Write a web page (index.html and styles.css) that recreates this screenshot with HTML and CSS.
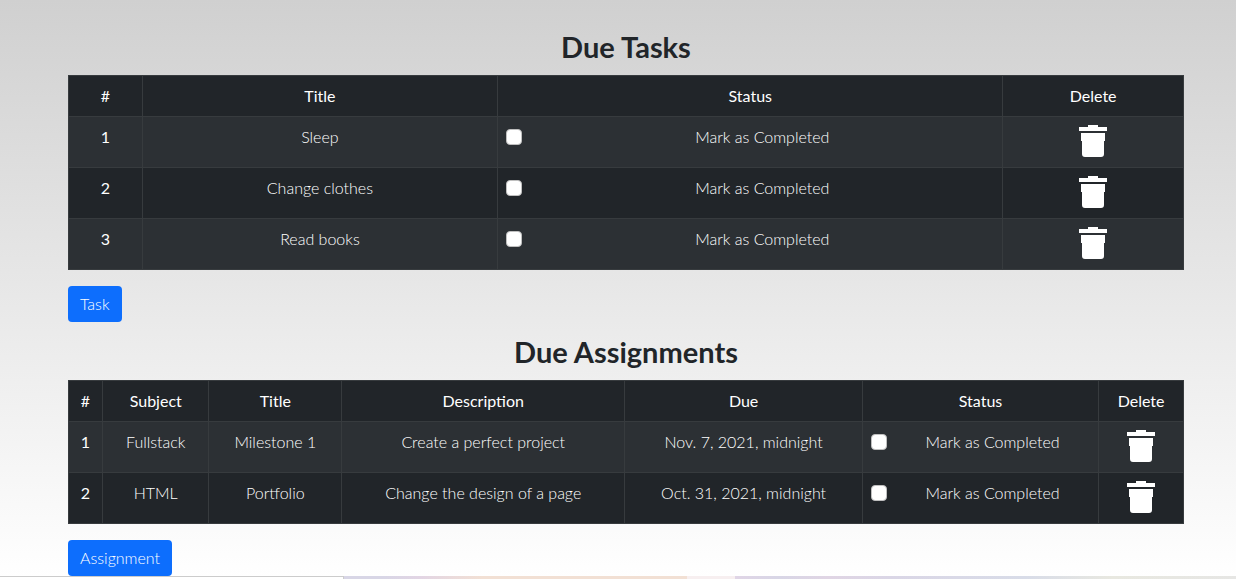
FILE: index.html
```html
<!DOCTYPE html>
<html lang="en">
<head>
<meta charset="utf-8">
<meta name="viewport" content="width=device-width, initial-scale=1">
<title>Due Tasks</title>
<link rel="stylesheet" href="styles.css">
</head>
<body>
<svg class="sprite" aria-hidden="true">
  <symbol id="trash" viewBox="0 0 28 32">
    <path d="M9 0h10v2h9v4H0V2h9z"/>
    <path d="M2 8h24v8h-1v13q0 3-3 3H6q-3 0-3-3V16H2z"/>
  </symbol>
</svg>
<main class="page">
  <section class="section">
    <h1 class="heading">Due Tasks</h1>
    <table class="table">
      <colgroup><col class="t-num"><col class="t-title"><col class="t-status"><col class="t-delete"></colgroup>
      <thead>
        <tr><th scope="col">#</th><th scope="col">Title</th><th scope="col">Status</th><th scope="col">Delete</th></tr>
      </thead>
      <tbody>
        <tr><th scope="row">1</th><td>Sleep</td><td><div class="check"><input type="checkbox" id="task1"><label for="task1">Mark as Completed</label></div></td><td><button class="delete" type="button" aria-label="Delete Sleep"><svg class="icon"><use href="#trash"/></svg></button></td></tr>
        <tr><th scope="row">2</th><td>Change clothes</td><td><div class="check"><input type="checkbox" id="task2"><label for="task2">Mark as Completed</label></div></td><td><button class="delete" type="button" aria-label="Delete Change clothes"><svg class="icon"><use href="#trash"/></svg></button></td></tr>
        <tr><th scope="row">3</th><td>Read books</td><td><div class="check"><input type="checkbox" id="task3"><label for="task3">Mark as Completed</label></div></td><td><button class="delete" type="button" aria-label="Delete Read books"><svg class="icon"><use href="#trash"/></svg></button></td></tr>
      </tbody>
    </table>
    <button class="btn" type="button">Task</button>
  </section>
  <section class="section">
    <h2 class="heading">Due Assignments</h2>
    <table class="table">
      <colgroup><col class="a-num"><col class="a-subject"><col class="a-title"><col class="a-desc"><col class="a-due"><col class="a-status"><col class="a-delete"></colgroup>
      <thead>
        <tr><th scope="col">#</th><th scope="col">Subject</th><th scope="col">Title</th><th scope="col">Description</th><th scope="col">Due</th><th scope="col">Status</th><th scope="col">Delete</th></tr>
      </thead>
      <tbody>
        <tr><th scope="row">1</th><td>Fullstack</td><td>Milestone 1</td><td>Create a perfect project</td><td>Nov. 7, 2021, midnight</td><td><div class="check"><input type="checkbox" id="work1"><label for="work1">Mark as Completed</label></div></td><td><button class="delete" type="button" aria-label="Delete Milestone 1"><svg class="icon"><use href="#trash"/></svg></button></td></tr>
        <tr><th scope="row">2</th><td>HTML</td><td>Portfolio</td><td>Change the design of a page</td><td>Oct. 31, 2021, midnight</td><td><div class="check"><input type="checkbox" id="work2"><label for="work2">Mark as Completed</label></div></td><td><button class="delete" type="button" aria-label="Delete Portfolio"><svg class="icon"><use href="#trash"/></svg></button></td></tr>
      </tbody>
    </table>
    <button class="btn" type="button">Assignment</button>
  </section>
</main>
<div class="strip"><div class="strip-panel"></div></div>
</body>
</html>
```

FILE: styles.css
```css
* { box-sizing: border-box; }

body {
  margin: 0;
  min-height: 100vh;
  color: #212529;
  background: linear-gradient(#d0d0d0, #ffffff);
  font: 300 16px/24px Lato, sans-serif;
}

.sprite {
  position: absolute;
  width: 0;
  height: 0;
}

.page {
  display: flex;
  flex-direction: column;
  gap: 12px;
  padding: 29px 52px 0 68px;
}

.section {
  display: flex;
  flex-direction: column;
  align-items: flex-start;
}

.heading {
  width: 100%;
  margin: 0 0 10px;
  font: 700 29px/36px Lato, sans-serif;
  text-align: center;
}

.table {
  width: 100%;
  margin: 0 0 16px;
  table-layout: fixed;
  border-collapse: collapse;
  color: #ffffff;
  background: #212529;
  text-align: center;
}

.table th,
.table td {
  padding: 8px;
  border: 1px solid #373b3e;
  vertical-align: top;
}

.table th { font-weight: 400; }

.table tbody tr { height: 51px; }

.table tbody tr:nth-child(odd) { background: #2c3034; }

.t-num { width: 6.6%; }
.t-title { width: 31.9%; }
.t-status { width: 45.3%; }
.t-delete { width: 16.2%; }

.a-num { width: 3.05%; }
.a-subject { width: 9.55%; }
.a-title { width: 11.9%; }
.a-desc { width: 25.4%; }
.a-due { width: 21.3%; }
.a-status { width: 21.2%; }
.a-delete { width: 7.6%; }

.check {
  display: flex;
  align-items: flex-start;
}

.check input {
  appearance: none;
  flex: none;
  width: 16px;
  height: 16px;
  margin: 4px 0;
  border: 1px solid #bfbfbf;
  border-radius: 4px;
  background: #ffffff;
}

.check input:checked {
  border-color: #0d6efd;
  background: #0d6efd;
}

.check label { flex: 1; padding-left: 8px; }

.delete {
  display: block;
  margin: 0 auto;
  padding: 0;
  border: 0;
  background: none;
  color: inherit;
}

.icon {
  display: block;
  width: 28px;
  height: 32px;
  fill: currentColor;
}

.btn {
  padding: 6px 12px;
  border: 0;
  border-radius: 4px;
  color: #ffffff;
  background: #0d6efd;
  font: inherit;
}

.strip {
  height: 3px;
  background: linear-gradient(90deg, #d8d6e6 31%, #e2d5e4 34%, #f2e0d4 39%, #f2e0d4 55.6%, #f7eff0 55.6%, #f7eff0 59.5%, #e0d5e6 59.5%, #d8d6e6 63%, #e0d5e4 67%, #dad6e6 72%, #d8dce8 83%, #e8e8e0 90%, #e6e6e4);
}

.strip-panel {
  width: 27.8%;
  height: 100%;
  border: solid #cccccc;
  border-width: 1px 1px 0 0;
  background: #ffffff;
}
```
